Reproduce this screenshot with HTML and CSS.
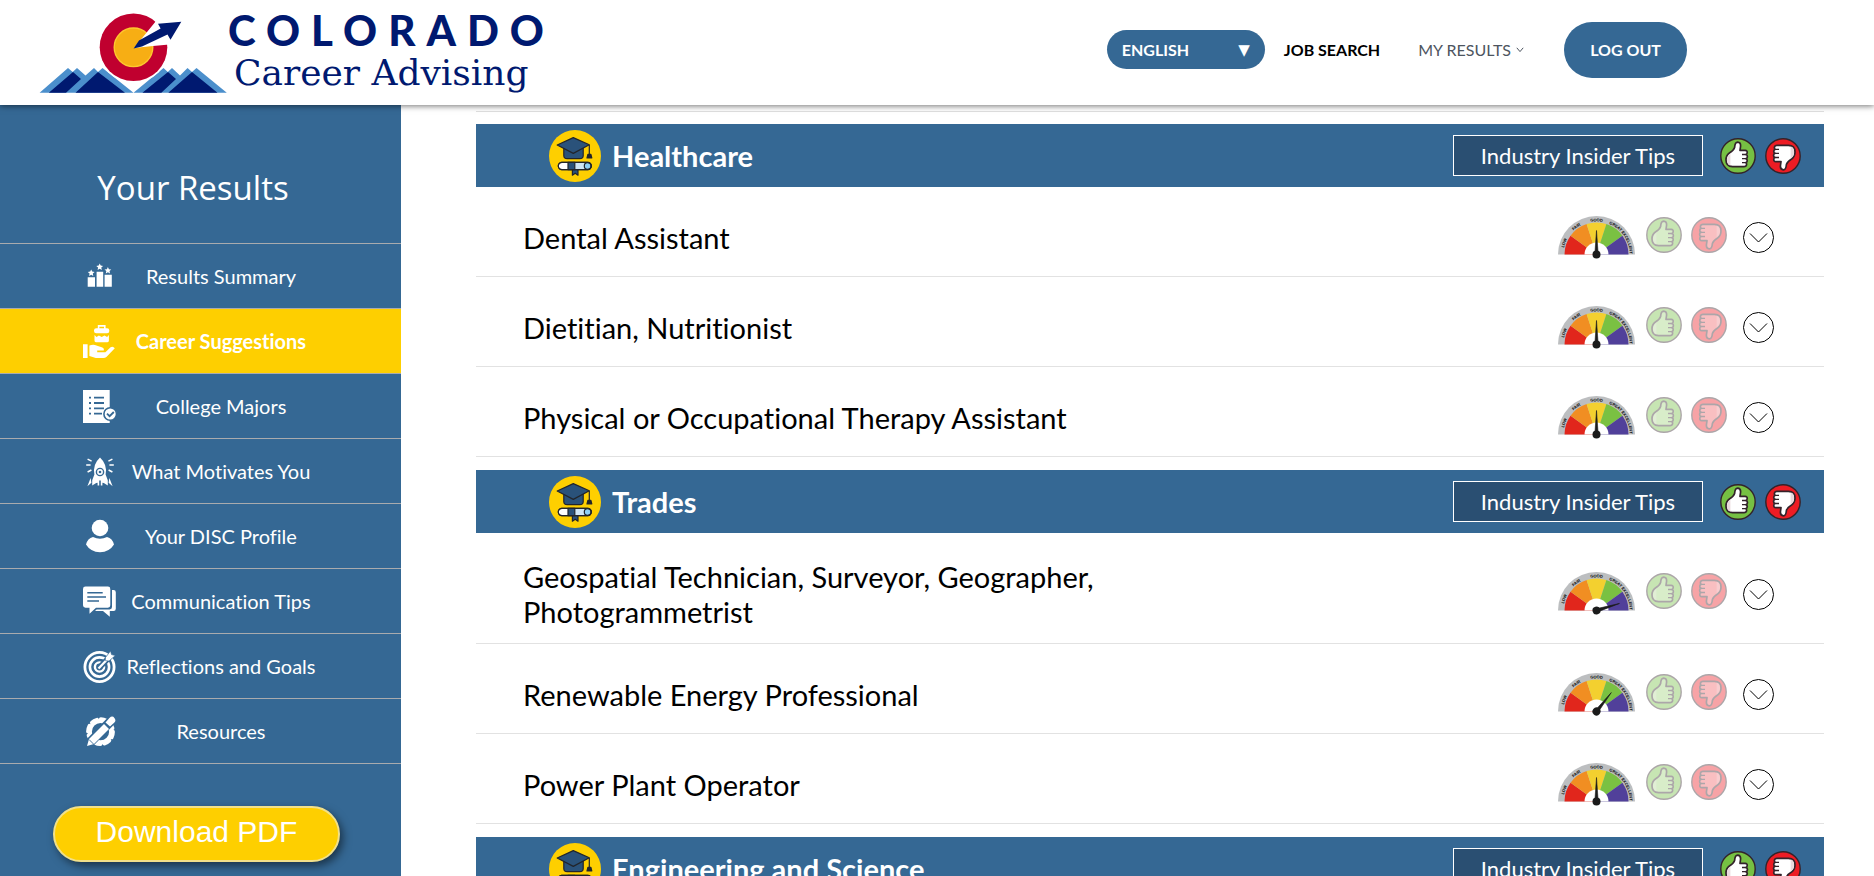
FILE: index.html
```html
<!DOCTYPE html>
<html lang="en">
<head>
	<meta charset="utf-8">
	<meta name="viewport" content="width=device-width, initial-scale=1">
	<title>Colorado Career Advising - Career Suggestions</title>
	<link rel="stylesheet" href="styles.css">
</head>
<body>
	<!-- shared icons -->
	<svg class="sprite" aria-hidden="true">
		<defs>
			<radialGradient id="dialShade" gradientUnits="userSpaceOnUse" cx="38.5" cy="38.5" r="32">
				<stop offset="0.75" stop-color="#000" stop-opacity="0"/>
				<stop offset="1" stop-color="#000" stop-opacity="0.35"/>
			</radialGradient>
			<path id="dialArc" d="M5.3 38.5a33.2 33.2 0 0 1 66.4 0"/>
		</defs>
		<symbol id="dial" viewBox="0 0 77 44">
			<path d="M0 38.5a38.5 38.5 0 0 1 77 0z" fill="#bcbec0"/>
			<path d="M38.5 38.5H6.5A32 32 0 0 1 12.6 19.7z" fill="#e1261c"/>
			<path d="M38.5 38.5L12.6 19.7A32 32 0 0 1 28.6 8.1z" fill="#f18e22"/>
			<path d="M38.5 38.5L28.6 8.1A32 32 0 0 1 48.4 8.1z" fill="#f3d02f"/>
			<path d="M38.5 38.5L48.4 8.1A32 32 0 0 1 64.4 19.7z" fill="#7ac142"/>
			<path d="M38.5 38.5L64.4 19.7A32 32 0 0 1 70.5 38.5z" fill="#51409a"/>
			<path d="M6.5 38.5a32 32 0 0 1 64 0z" fill="url(#dialShade)"/>
			<path d="M26.5 38.5a12 12 0 0 1 24 0z" fill="#fff"/>
			<text class="dial-text"><textPath href="#dialArc" startOffset="11%">LOW</textPath></text>
			<text class="dial-text"><textPath href="#dialArc" startOffset="30%">FAIR</textPath></text>
			<text class="dial-text"><textPath href="#dialArc" startOffset="50%">GOOD</textPath></text>
			<text class="dial-text"><textPath href="#dialArc" startOffset="69%">GREAT</textPath></text>
			<text class="dial-text"><textPath href="#dialArc" startOffset="88%">EXCELLENT</textPath></text>
		</symbol>
		<symbol id="needle" viewBox="0 0 77 44" overflow="visible">
			<path d="M38.5 14.5L40.2 38.5h-3.4z" fill="#1b1b1b" stroke="#1b1b1b" stroke-width="0.6"/>
			<circle cx="38.5" cy="38.5" r="4" fill="#1b1b1b"/>
		</symbol>
		<symbol id="hand" viewBox="0 0 36 36">
			<path class="hand-fill" d="M14.6 9.5Q15 4.2 17.6 4.2Q20.8 4.4 20.6 8L20 12.4H25.2Q27.4 12.6 27.2 14.6Q27.2 16.2 26 16.5Q27.6 17 27.4 18.8Q27.2 20.4 26 20.6Q27.4 21.2 27.2 22.8Q27 24.4 25.8 24.6Q26.8 25.2 26.6 26.6Q26.2 28.6 24 28.6H12.5Q6 28.4 6 22Q6 17.4 9.4 15Q13.8 12.4 14.6 9.5z" fill="#fff" stroke="#33232a" stroke-width="1.7" stroke-linejoin="round"/>
			<path class="hand-fill" d="M7 22Q7 17.8 10.4 15.6V27.4Q7 27 7 22z" fill="#e9d9dc"/>
			<path d="M22 16.5h4M22 20.6h4M22 24.6h4" stroke="#33232a" stroke-width="1.4"/>
		</symbol>
		<symbol id="up" viewBox="0 0 36 36">
			<circle cx="18" cy="18" r="17.2" fill="#76c043" stroke="#33232a" stroke-width="1.4"/>
			<use href="#hand" width="36" height="36"/>
		</symbol>
		<symbol id="down" viewBox="0 0 36 36">
			<circle cx="18" cy="18" r="17.2" fill="#ed1c24" stroke="#33232a" stroke-width="1.4"/>
			<use href="#hand" width="36" height="36" transform="rotate(180 18 18)"/>
		</symbol>
		<symbol id="chevron" viewBox="0 0 31 31">
			<circle cx="15.5" cy="15.5" r="15" fill="none" stroke="#000"/>
			<path d="M7 11.5l8.5 8.5 8.5-8.5" fill="none" stroke="#000"/>
		</symbol>
		<symbol id="grad" viewBox="0 0 52 52">
			<circle cx="26" cy="26" r="26" fill="#fecf00"/>
			<g stroke="#22252b" stroke-width="1.2" stroke-linejoin="round">
				<path d="M14.8 18v7.5q0 3.2 3.4 3.2h12.6q3.4 0 3.4-3.2V18z" fill="#2a527a"/>
				<path d="M8.2 15L24.3 7.6 40.3 14.8 24.3 23.4z" fill="#2a527a"/>
				<path d="M40.3 15v10" fill="none"/>
				<path d="M38.9 24.4h3l.9 3.6h-4.8z" fill="#22252b"/>
				<path d="M23.4 39v6.2l2.8-2 2.8 2V39z" fill="#2a527a"/>
				<rect x="9.3" y="32.4" width="33" height="7.2" rx="3.6" fill="#fff"/>
				<path d="M26 32.4h12v7.2H26z" fill="#cfe6f5" stroke="none"/>
				<path d="M19 32.4h6.8v7.2H19z" fill="#2a527a"/>
				<circle cx="38.6" cy="36" r="3.3" fill="#8fd0f5"/>
				<rect x="9.3" y="32.4" width="33" height="7.2" rx="3.6" fill="none"/>
			</g>
		</symbol>
	</svg>

	<header class="header">
		<a href="#" class="logo" aria-label="Colorado Career Advising">
			<svg class="logo-mark" viewBox="39 13 188 80">
				<!-- mountains -->
				<path d="M39.6 92.7L68 68l4.7 4L77 68l8.5 7.5L94 68l4 4 4.5-4 31 24.7z" fill="#4b8fcc"/>
				<path d="M133.5 92.7l30-24.7 4.3 4 4.2-4 8 7.5 7.5-7.5 4.5 4 4.5-4 30.3 24.7z" fill="#4b8fcc"/>
				<path d="M48.8 92.7L73 72l8 7-15 13.7zM75.5 92.7L98 72l27 20.7zM142.4 92.7L168 72l8 7-14.7 13.7zM168.3 92.7L192 72l25.5 20.7z" fill="#001970"/>
				<!-- C and target -->
				<circle cx="133.5" cy="47.3" r="35.5" fill="#fff"/>
				<circle cx="133.5" cy="47.3" r="33.8" fill="#c0002f"/>
				<circle cx="133.5" cy="47.3" r="19.3" fill="#f7ae14" stroke="#fdc82f" stroke-width="1.4"/>
				<path d="M134 48L155 22.3 162 10 175 28 172 44.2 153 46z" fill="#fff"/>
				<path d="M133.6 48.5L139 40.6 160.6 28.4 158 23.7 181.3 21.8 170.5 39.7 167.5 34.5 142 46.6z" fill="#001970"/>
			</svg>
			<span class="logo-text">
				<span class="logo-state">COLORADO</span>
				<span class="logo-name">Career Advising</span>
			</span>
		</a>
		<nav class="topnav">
			<div class="language">
				<select aria-label="Language">
					<option>ENGLISH</option>
					<option>ESPAÑOL</option>
				</select>
			</div>
			<a href="#" class="topnav-link">JOB SEARCH</a>
			<a href="#" class="topnav-link topnav-link-light">MY RESULTS
				<svg width="8" height="6" viewBox="0 0 8 6"><path d="M.8.8L4 4.6 7.2.8" fill="none" stroke="currentColor"/></svg>
			</a>
			<button class="logout">LOG OUT</button>
		</nav>
	</header>

	<div class="page">
		<aside class="sidebar">
			<h2>Your Results</h2>
			<nav class="menu">
				<a href="#">
					<svg viewBox="0 0 33 33" fill="#fff"><path d="M4.7 17.3H12v9.4H4.7zM13.6 11.7h6.6v15h-6.6zM21.6 14.7h7.2v12h-7.2z"/><path id="star" d="M16.7 3.4l1 2.2 2.4.3-1.8 1.6.5 2.4-2.1-1.2-2.1 1.2.5-2.4-1.8-1.6 2.4-.3z"/><use href="#star" x="-8.5" y="6"/><use href="#star" x="8.2" y="3.6"/></svg>
					<span>Results Summary</span>
				</a>
				<a href="#" class="active">
					<svg viewBox="0 0 33 33" fill="#fff"><path d="M15.6 4V.9h6.2V4" fill="none" stroke="#fff" stroke-width="1.6"/><rect x="11" y="3.2" width="15.3" height="5" rx="2.2"/><path d="M11.5 10l2 2 2.4-1.6 2.8 1.6 2.8-1.6 2.6 1.6 1.8-2v5.8q0 1.4-1.4 1.4H12.9q-1.4 0-1.4-1.4z"/><path d="M0 19.2h4.6V33H0zM6.4 20.4q4-1.4 7 0l6 2.2q2.2 1 1.4 2.8h-6.6v1.8h8.2l5.2-5q2.4-1.4 4.2 1L23.4 32q-1.2 1-3 1h-7.6l-6.4-2z"/></svg>
					<span>Career Suggestions</span>
				</a>
				<a href="#">
					<svg viewBox="0 0 33 33" fill="#fff"><path d="M0 0h26.7v33H0z"/><path d="M6 7.7h2M6 13h2M6 18.3h2M6 23.7h2M11 7.7h10M11 13h10M11 18.3h10M11 23.7h8" stroke="#356894" stroke-width="1.8"/><circle cx="27.2" cy="24" r="6.3" stroke="#356894" stroke-width="1.6"/><path d="M24 23.6l2.6 2.6 4.2-4.2" fill="none" stroke="#356894" stroke-width="1.8"/></svg>
					<span>College Majors</span>
				</a>
				<a href="#">
					<svg viewBox="0 0 33 33" fill="#fff"><path d="M17 2.6q7.6 7 5.6 17l2.2 5.600v5.400L20.800 28l-1.400-.2v2.800h-1.600v-5h-1.600v5h-1.600v-2.800l-1.400.2-4 2.600v-5.400l2.200-5.600Q9.400 9.600 17 2.600z"/><circle cx="17" cy="17" r="3.600" stroke="#356894" stroke-width="1.400"/><circle cx="17" cy="17" r="1.300" fill="#356894"/><path d="M7.600 23l.8 4.800-4 3.400zM26.400 23l-.8 4.800 4 3.400z"/><path d="M4.600 4.200l4 2M3.200 10h4.400M4.600 17l3.800-2M29.400 4.200l-4 2M30.800 10h-4.400M29.400 17l-3.800-2" stroke="#fff" stroke-width="1.500"/></svg>
					<span>What Motivates You</span>
				</a>
				<a href="#">
					<svg viewBox="0 0 33 33" fill="#fff"><circle cx="17" cy="8" r="8.300"/><path d="M3 24.600Q4.500 18.400 10 17q7 3.600 14 0 5.500 1.400 7 7.600-4.600 7.600-14 7.600T3 24.600z"/></svg>
					<span>Your DISC Profile</span>
				</a>
				<a href="#">
					<svg viewBox="0 0 33 33" fill="#fff"><path d="M2.500 1.500h22.400q2.400 0 2.400 2.400v16.400q0 2.400-2.400 2.400H13l-6.500 6v-6h-4Q0 22.700 0 20.300V3.900Q0 1.500 2.500 1.500z"/><path d="M29 5h1.600q2.200 0 2.200 2.200v16.600q0 2.200-2.200 2.200h-3.800v5.800L20 26h-8l1.600-1.500h13q2.400 0 2.400-2.400z"/><path d="M4.300 7.700h15.400M4.300 11.900h18.700M4.300 16h11.700" stroke="#356894" stroke-width="1.500"/></svg>
					<span>Communication Tips</span>
				</a>
				<a href="#">
					<svg viewBox="0 0 33 33" fill="none" stroke="#fff"><circle cx="16.500" cy="17" r="14.600" stroke-width="2.800"/><circle cx="16.500" cy="17" r="9.600" stroke-width="2.600"/><circle cx="16.500" cy="17" r="4.600" stroke-width="2.400"/><path d="M17 17L28 5.500" stroke="#356894" stroke-width="5.500"/><path d="M15.500 18.500L27 6.500" stroke-width="2.200"/><path d="M22.500 7.500L27.500 1l1 3.600 3.800 1L26 11l-3.600-.4z" fill="#fff" stroke="#356894" stroke-width=".6"/></svg>
					<span>Reflections and Goals</span>
				</a>
				<a href="#">
					<svg viewBox="0 0 33 33" fill="#fff"><circle cx="17.500" cy="16.700" r="10.600" fill="none" stroke="#fff" stroke-width="4"/><circle cx="17.500" cy="16.700" r="12.400" fill="none" stroke="#fff" stroke-width="4" stroke-dasharray="5.740 4" stroke-linecap="round"/><path d="M3.500 31L28 6" stroke="#356894" stroke-width="9.500"/><path d="M4 31l2-7L21 9l5 5-15 15z"/><path d="M22.500 7.500l3.900-4.600q3-2.600 5 0t0 4.500l-4.400 4z"/><path d="M6 24.500l4.500 4.500" stroke="#356894" stroke-width=".9" fill="none"/></svg>
					<span>Resources</span>
				</a>
			</nav>
			<button class="download">Download PDF</button>
		</aside>

		<main class="content">
			<section class="industry">
				<div class="industry-head">
					<svg class="grad"><use href="#grad"/></svg>
					<h3>Healthcare</h3>
					<button class="tips">Industry Insider Tips</button>
					<div class="votes">
						<button aria-label="Like Healthcare"><svg><use href="#up"/></svg></button>
						<button aria-label="Dislike Healthcare"><svg><use href="#down"/></svg></button>
					</div>
				</div>
				<div class="career">
					<h4>Dental Assistant</h4>
					<svg class="gauge"><use href="#dial"/><use href="#needle"/></svg>
					<div class="votes faded">
						<button aria-label="Like Dental Assistant"><svg><use href="#up"/></svg></button>
						<button aria-label="Dislike Dental Assistant"><svg><use href="#down"/></svg></button>
					</div>
					<button class="expand" aria-label="Show Dental Assistant"><svg><use href="#chevron"/></svg></button>
				</div>
				<div class="career">
					<h4>Dietitian, Nutritionist</h4>
					<svg class="gauge"><use href="#dial"/><use href="#needle"/></svg>
					<div class="votes faded">
						<button aria-label="Like Dietitian, Nutritionist"><svg><use href="#up"/></svg></button>
						<button aria-label="Dislike Dietitian, Nutritionist"><svg><use href="#down"/></svg></button>
					</div>
					<button class="expand" aria-label="Show Dietitian, Nutritionist"><svg><use href="#chevron"/></svg></button>
				</div>
				<div class="career">
					<h4>Physical or Occupational Therapy Assistant</h4>
					<svg class="gauge"><use href="#dial"/><use href="#needle"/></svg>
					<div class="votes faded">
						<button aria-label="Like Physical or Occupational Therapy Assistant"><svg><use href="#up"/></svg></button>
						<button aria-label="Dislike Physical or Occupational Therapy Assistant"><svg><use href="#down"/></svg></button>
					</div>
					<button class="expand" aria-label="Show Physical or Occupational Therapy Assistant"><svg><use href="#chevron"/></svg></button>
				</div>
			</section>

			<section class="industry">
				<div class="industry-head">
					<svg class="grad"><use href="#grad"/></svg>
					<h3>Trades</h3>
					<button class="tips">Industry Insider Tips</button>
					<div class="votes">
						<button aria-label="Like Trades"><svg><use href="#up"/></svg></button>
						<button aria-label="Dislike Trades"><svg><use href="#down"/></svg></button>
					</div>
				</div>
				<div class="career">
					<h4>Geospatial Technician, Surveyor, Geographer, Photogrammetrist</h4>
					<svg class="gauge"><use href="#dial"/><use href="#needle" class="excellent"/></svg>
					<div class="votes faded">
						<button aria-label="Like Geospatial Technician"><svg><use href="#up"/></svg></button>
						<button aria-label="Dislike Geospatial Technician"><svg><use href="#down"/></svg></button>
					</div>
					<button class="expand" aria-label="Show Geospatial Technician"><svg><use href="#chevron"/></svg></button>
				</div>
				<div class="career">
					<h4>Renewable Energy Professional</h4>
					<svg class="gauge"><use href="#dial"/><use href="#needle" class="great"/></svg>
					<div class="votes faded">
						<button aria-label="Like Renewable Energy Professional"><svg><use href="#up"/></svg></button>
						<button aria-label="Dislike Renewable Energy Professional"><svg><use href="#down"/></svg></button>
					</div>
					<button class="expand" aria-label="Show Renewable Energy Professional"><svg><use href="#chevron"/></svg></button>
				</div>
				<div class="career">
					<h4>Power Plant Operator</h4>
					<svg class="gauge"><use href="#dial"/><use href="#needle"/></svg>
					<div class="votes faded">
						<button aria-label="Like Power Plant Operator"><svg><use href="#up"/></svg></button>
						<button aria-label="Dislike Power Plant Operator"><svg><use href="#down"/></svg></button>
					</div>
					<button class="expand" aria-label="Show Power Plant Operator"><svg><use href="#chevron"/></svg></button>
				</div>
			</section>

			<section class="industry">
				<div class="industry-head">
					<svg class="grad"><use href="#grad"/></svg>
					<h3>Engineering and Science</h3>
					<button class="tips">Industry Insider Tips</button>
					<div class="votes">
						<button aria-label="Like Engineering and Science"><svg><use href="#up"/></svg></button>
						<button aria-label="Dislike Engineering and Science"><svg><use href="#down"/></svg></button>
					</div>
				</div>
			</section>
		</main>
	</div>
</body>
</html>
```
FILE: styles.css
```css
* {
	box-sizing: border-box;
}

body {
	margin: 0;
	height: 100vh;
	display: flex;
	flex-direction: column;
	overflow: hidden;
	background: #fff;
	color: #000;
	font-family: Lato, "Liberation Sans", sans-serif;
	font-variant-ligatures: no-common-ligatures;
}

h2, h3, h4 {
	margin: 0;
}

a {
	color: inherit;
	text-decoration: none;
}

button {
	padding: 0;
	border: 0;
	background: none;
	color: inherit;
	font-family: inherit;
	font-variant-ligatures: inherit;
	cursor: pointer;
}

svg {
	display: block;
}

.sprite {
	display: none;
}

/* Header */
.header {
	position: relative;
	z-index: 2;
	flex: none;
	display: flex;
	justify-content: space-between;
	padding: 0 187px 0 39px;
	background: #fff;
	box-shadow: 0 1px 6px rgba(0, 0, 0, 0.55);
}

.logo {
	display: flex;
	gap: 1px;
	height: 105px;
	padding-top: 13px;
	color: #001970;
}

.logo-mark {
	width: 188px;
	height: 80px;
}

.logo-text {
	display: flex;
	flex-direction: column;
}

.logo-state {
	font-size: 42px;
	font-weight: 900;
	line-height: 34px;
	letter-spacing: 11px;
}

.logo-name {
	padding-left: 6px;
	font-family: "DejaVu Serif", serif;
	font-size: 36px;
	line-height: 52px;
}

.topnav {
	display: flex;
	align-items: center;
	padding-bottom: 6px;
	font-size: 16px;
	font-weight: bold;
}

.language {
	position: relative;
	width: 158px;
	margin-right: 19px;
	color: #fff;
}

.language::after {
	content: "▼";
	position: absolute;
	top: 10px;
	right: 15px;
	font: 15px/20px "DejaVu Sans", sans-serif;
	pointer-events: none;
}

.language select {
	appearance: none;
	width: 100%;
	height: 39px;
	padding: 0 15px;
	border: 0;
	border-radius: 20px;
	background: #356894;
	color: #fff;
	font: inherit;
}

.topnav-link {
	margin-right: 38px;
}

.topnav-link-light {
	display: flex;
	align-items: center;
	gap: 5px;
	margin-right: 40px;
	color: #4d5560;
	font-weight: normal;
}

.logout {
	width: 123px;
	height: 56px;
	border-radius: 28px;
	background: #356894;
	color: #fff;
	font-size: 16px;
	font-weight: bold;
}

/* Sidebar */
.page {
	flex: 1;
	min-height: 0;
	display: flex;
}

.sidebar {
	flex: 0 0 401px;
	background: #356894;
	color: #fff;
}

.sidebar h2 {
	padding: 60px 15px 32px 0;
	border-bottom: 1px solid #a9abae;
	font-family: "Open Sans", sans-serif;
	font-size: 33px;
	font-weight: 400;
	line-height: 46px;
	text-align: center;
}

.menu a {
	display: flex;
	justify-content: center;
	align-items: center;
	gap: 10px;
	height: 65px;
	padding-right: 2px;
	border-bottom: 1px solid #a9abae;
	font-size: 20px;
}

.menu a.active {
	background: #fecf00;
	font-weight: bold;
}

.menu svg {
	width: 33px;
	height: 33px;
	overflow: visible;
}

.menu span {
	width: 191px;
	text-align: center;
	white-space: nowrap;
}

.download {
	display: block;
	width: 287px;
	height: 56px;
	margin: 42px 0 0 53px;
	padding-bottom: 4px;
	border: 2px solid #f1e08a;
	border-radius: 28px;
	background: #fecf00;
	box-shadow: 3px 4px 8px rgba(0, 0, 0, 0.5);
	font-family: "Liberation Sans", Arial, sans-serif;
	font-size: 30px;
}

/* Career list */
.content {
	flex: 1;
	margin: 6px 50px 0 75px;
	border-top: 1px solid #e0e0e0;
	padding-top: 12px;
	overflow: hidden;
}

.industry {
	margin-bottom: 13px;
}

.industry-head {
	display: flex;
	align-items: center;
	height: 63px;
	padding: 0 23px 0 73px;
	background: #356894;
	color: #fff;
}

.industry-head h3 {
	flex: 1;
	padding-left: 11px;
	font-size: 29px;
	line-height: 35px;
}

.grad {
	width: 52px;
	height: 52px;
}

.tips {
	width: 250px;
	height: 41px;
	margin-right: 17px;
	border: 1px solid #fff;
	background: #2a4f72;
	font-size: 22px;
}

.votes {
	display: flex;
	gap: 9px;
}

.votes svg {
	width: 36px;
	height: 36px;
}

.votes.faded {
	--hand-opacity: 0.3;
	margin: 0 16px 6px 11px;
}

.faded svg {
	opacity: 0.4;
}

.hand-fill {
	fill-opacity: var(--hand-opacity, 1);
}

.career {
	display: flex;
	align-items: center;
	min-height: 90px;
	padding: 26px 50px 14px 47px;
	border-bottom: 1px solid #e2e2e2;
}

.career h4 {
	max-width: 600px;
	margin-right: auto;
	font-size: 29px;
	font-weight: normal;
	line-height: 35px;
}

.gauge {
	width: 77px;
	height: 44px;
	overflow: visible;
}

.dial-text {
	font-family: "Liberation Sans", Arial, sans-serif;
	font-size: 4px;
	font-weight: bold;
	text-anchor: middle;
}

.great,
.excellent {
	transform: rotate(38deg);
	transform-origin: 38.5px 38.5px;
}

.excellent {
	transform: rotate(73deg);
}

.expand svg {
	width: 31px;
	height: 31px;
}
```
